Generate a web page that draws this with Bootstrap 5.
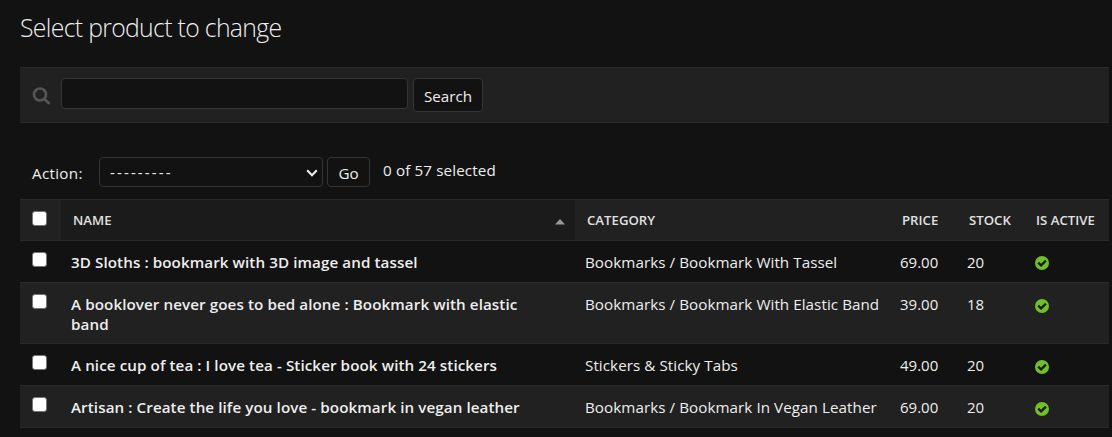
<!DOCTYPE html>
<html lang="en" data-bs-theme="dark">
<head>
<meta charset="utf-8">
<title>Select product to change</title>
<link href="https://cdn.jsdelivr.net/npm/bootstrap@5.3.0/dist/css/bootstrap.min.css" rel="stylesheet">
<style>
body{background:#121212;color:#eee;font-family:"Open Sans","Noto Sans",sans-serif;font-size:15.2px;line-height:20px;height:437px;overflow:hidden}
.page{padding:11px 3px 0 20px}
h1{font-size:24.8px;font-weight:300;line-height:32px;margin:0 0 24px;letter-spacing:-.68px;color:#eee}
.toolbar{height:56px;background:#212121;border:solid #2a2a2a;border-width:1px 0;padding:10px 12px 0}
.toolbar svg{margin:9px 11px 0 0}
.field,.tool-btn{background:#121212;border:1px solid #353535;border-radius:4px;color:#eee}
.field{height:31px;width:347px;padding:0 8px}
.tool-btn{font-size:15.2px;line-height:20px;padding:0 0 0;text-align:center}
.search-btn{width:70px;height:34px;margin-left:5px;padding-top:1px}
.actions{height:76px;padding:34px 12px 0}
.actions .lbl{width:67px;padding-top:6px;letter-spacing:.3px}
.actions .field{width:224px;height:30px;padding:0 0 0 10px;line-height:28px}
.dashes{letter-spacing:2.08px}
.go-btn{width:43px;height:30px;margin-left:4px;padding-top:2px}
.count{margin:3px 0 0 13px;letter-spacing:.13px}
.results{table-layout:fixed;width:1089px;margin:0;border-collapse:separate;border-spacing:0;color:#eee}
.results th,.results td{vertical-align:top;text-align:left;padding:10px 10px 0;border-bottom:1px solid #2a2a2a;height:42px}
.results td{white-space:nowrap;padding-top:11px}
.results td.cat{letter-spacing:.06px}
.results td.num{font-size:15px}
.results td.nm{white-space:normal;font-weight:600;letter-spacing:.08px}
.results tr.tall td{height:61px}
.results thead th{height:42px;border-top:1px solid #2a2a2a;background:#212121;color:#e0e0e0;font-size:13.2px;font-weight:600;padding:10px 12px 0;text-transform:uppercase;white-space:nowrap}
.results thead th.sorted{background:#1b1b1b}
.results tbody tr:nth-child(even) td{background:#212121}
.results .pick{padding:11px 0 0 12px!important;line-height:0}
.results input{width:15px;height:15px;margin:0;appearance:none;background:#fff;border:1px solid #767676;border-radius:3px;display:block}
.results .ok{padding:16px 0 0 11px;line-height:0}
.results tr:first-child .ok{padding-top:15px}
.caret{margin:11px 4px 0 0}
</style>
<script src="https://cdn.jsdelivr.net/npm/bootstrap@5.3.0/dist/js/bootstrap.bundle.min.js"></script>
</head>
<body>
<svg class="d-none"><symbol id="yes" viewBox="0 0 14 14"><circle cx="7" cy="7" r="7" fill="#70bf2b"/><path d="M3.200 6.600 6.100 9.300 10.900 4.700" fill="none" stroke="#1a1a1a" stroke-width="2.300"/></symbol></svg>
<main class="page">
<h1>Select product to change</h1>
<form class="toolbar d-flex align-items-start">
<svg width="18" height="18" viewBox="0 0 18 18" fill="none" stroke="#555"><circle cx="8" cy="7.500" r="6" stroke-width="2.600"/><path d="m12.500 12 4.200 4" stroke-width="2.800" stroke-linecap="round"/></svg>
<input class="field" type="text" aria-label="Search"><button type="button" class="tool-btn search-btn">Search</button>
</form>
<div class="actions d-flex align-items-start">
<span class="lbl">Action:</span>
<div class="field d-flex justify-content-between"><span class="dashes">---------</span><svg class="caret" width="12" height="8" viewBox="0 0 12 8"><path d="m1.200 1.200 4.800 5 4.800-5" fill="none" stroke="#eee" stroke-width="2"/></svg></div>
<button type="button" class="tool-btn go-btn">Go</button><span class="count">0 of 57 selected</span>
</div>
<table class="results">
<colgroup><col style="width:41px"><col style="width:514px"><col style="width:315px"><col style="width:67px"><col style="width:67px"><col style="width:85px"></colgroup>
<thead><tr><th class="pick"><input type="checkbox" aria-label="All"></th><th class="sorted"><div class="d-flex justify-content-between"><span>Name</span><svg width="12" height="20" viewBox="0 0 12 20" style="margin-right:-3px"><path d="M1 14.500 6 9l5 5.500z" fill="#999"/></svg></div></th><th>Category</th><th>Price</th><th>Stock</th><th>Is active</th></tr></thead>
<tbody>
<tr><td class="pick"><input type="checkbox"></td><td class="nm">3D Sloths : bookmark with 3D image and tassel</td><td class="cat">Bookmarks / Bookmark With Tassel</td><td class="num">69.00</td><td class="num">20</td><td class="ok"><svg width="14" height="14"><use href="#yes"/></svg></td></tr>
<tr class="tall"><td class="pick"><input type="checkbox"></td><td class="nm">A booklover never goes to bed alone : Bookmark with elastic<br>band</td><td class="cat">Bookmarks / Bookmark With Elastic Band</td><td class="num">39.00</td><td class="num">18</td><td class="ok"><svg width="14" height="14"><use href="#yes"/></svg></td></tr>
<tr><td class="pick"><input type="checkbox"></td><td class="nm">A nice cup of tea : I love tea - Sticker book with 24 stickers</td><td class="cat">Stickers &amp; Sticky Tabs</td><td class="num">49.00</td><td class="num">20</td><td class="ok"><svg width="14" height="14"><use href="#yes"/></svg></td></tr>
<tr><td class="pick"><input type="checkbox"></td><td class="nm">Artisan : Create the life you love - bookmark in vegan leather</td><td class="cat">Bookmarks / Bookmark In Vegan Leather</td><td class="num">69.00</td><td class="num">20</td><td class="ok"><svg width="14" height="14"><use href="#yes"/></svg></td></tr>
</tbody></table>
</main>
</body>
</html>
